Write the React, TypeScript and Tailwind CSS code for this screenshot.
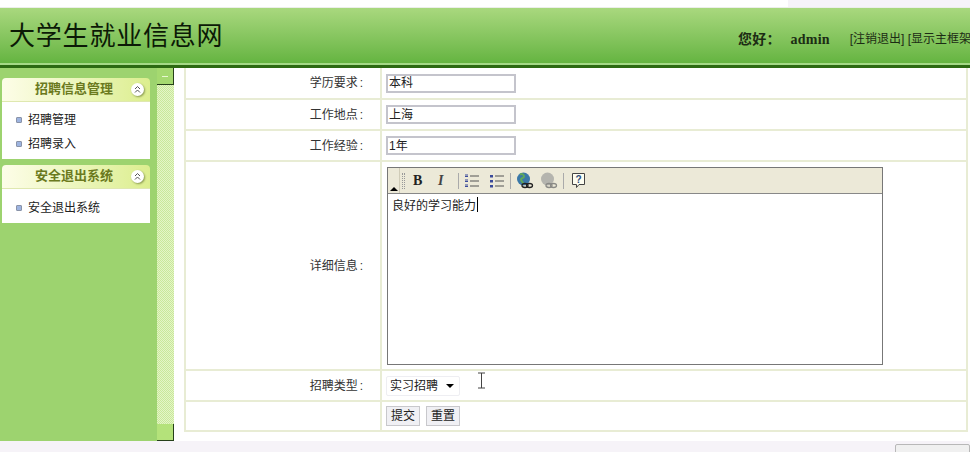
const cjk = { fontFamily: '"Liberation Sans","Noto Sans CJK SC",sans-serif' };
const serif = { fontFamily: '"Liberation Serif","Noto Sans CJK SC",serif' };

function Collapse() {
  return (
    <span className="flex h-[13px] w-[13px] items-center justify-center rounded-full bg-white shadow-[1px_1px_2px_#8a9a50]">
      <svg width="9" height="9" viewBox="0 0 9 9" fill="none" stroke="#555" strokeWidth="1">
        <path d="M2 4 L4.5 1.5 L7 4 M2 7.5 L4.5 5 L7 7.5" />
      </svg>
    </span>
  );
}

function Panel({ title, items, bodyClass }: { title: string; items: string[]; bodyClass: string }) {
  return (
    <div className="w-[148px]">
      <div className="flex h-[24px] items-center justify-between rounded-t-[4px] border-b border-[#dfe8b0] bg-gradient-to-r from-[#fdfde8] to-[#dcee8e] pl-[33px] pr-[6px]">
        <span className="mb-[2px] text-[13px] font-bold text-[#6b7a1e]">{title}</span>
        <Collapse />
      </div>
      <div className={`flex flex-col bg-white pl-[14px] ${bodyClass}`}>
        {items.map((t) => (
          <div key={t} className="flex h-[24px] shrink-0 items-center gap-[6px] text-[12px] text-[#222]">
            <span className="h-[6px] w-[6px] rounded-[1px] border border-[#8a93a8] bg-[#9db4e0]" />
            {t}
          </div>
        ))}
      </div>
    </div>
  );
}

function Row({ label, h, children }: { label: string; h: string; children?: React.ReactNode }) {
  return (
    <div className={`flex border-b-2 border-[#e8ecd4] ${h}`}>
      <div className="flex w-[194px] items-center justify-end pr-[17px] text-[12px] text-[#333]">
        {label}
        {label && <span className="pl-[2px]">:</span>}
      </div>
      <div className="w-[2px] bg-[#e8ecd4]" />
      <div className="flex flex-1 items-center pl-[4px]">{children}</div>
    </div>
  );
}

function TextBox({ v }: { v: string }) {
  return (
    <div className="flex h-[19px] w-[130px] items-center border-2 border-[#c4c4cc] bg-white pl-[1px] text-[12px] text-[#222]">{v}</div>
  );
}

function Toolbar() {
  return (
    <div className="flex h-[26px] shrink-0 items-center border-b border-[#888] bg-[#ece9d8]">
      <div className="flex h-full w-[12px] items-end justify-center border-r border-[#d0ccb8] pb-[2px]">
        <span className="h-0 w-0 border-x-[4px] border-b-[4px] border-x-transparent border-b-black" />
      </div>
      <div className="ml-[2px] h-[16px] w-[3px] border-x border-dotted border-[#999]" />
      <span className="ml-[8px] w-[12px] text-[14px] font-bold leading-none text-[#222]" style={serif}>B</span>
      <span className="ml-[13px] w-[9px] text-[14px] font-bold italic leading-none text-[#444]" style={serif}>I</span>
      <div className="ml-[11px] h-[16px] w-px bg-[#aaa]" />
      <svg className="ml-[5px]" width="16" height="16" viewBox="0 0 16 16">
        <path d="M1 2h3M1 3.5h3M1 7h3M1 8.5h3M1 12h3M1 13.5h3" stroke="#3a4a9a" strokeWidth="1" />
        <path d="M6 3h9M6 8h9M6 13h9" stroke="#555" strokeWidth="1" />
      </svg>
      <svg className="ml-[9px]" width="16" height="16" viewBox="0 0 16 16">
        <rect x="1" y="2" width="3" height="2.5" fill="#3a4a9a" />
        <rect x="1" y="7" width="3" height="2.5" fill="#3a4a9a" />
        <rect x="1" y="12" width="3" height="2.5" fill="#3a4a9a" />
        <path d="M6 3h9M6 8h9M6 13h9" stroke="#555" strokeWidth="1" />
      </svg>
      <div className="ml-[5px] h-[16px] w-px bg-[#aaa]" />
      <svg className="ml-[5px]" width="18" height="18" viewBox="0 0 18 18">
        <circle cx="7.5" cy="7" r="6.5" fill="#3a78a8" />
        <path d="M4 2.5c2-1 4 0 4 2s-3 1-3 3 2 2 2 4" stroke="#5fa85a" strokeWidth="2" fill="none" />
        <ellipse cx="9" cy="13.5" rx="3" ry="2" fill="none" stroke="#222" strokeWidth="1.3" />
        <ellipse cx="13.5" cy="13.5" rx="3" ry="2" fill="none" stroke="#222" strokeWidth="1.3" />
      </svg>
      <svg className="ml-[6px]" width="18" height="18" viewBox="0 0 18 18">
        <circle cx="7.5" cy="7" r="6.5" fill="#b4b4ae" />
        <ellipse cx="9" cy="13.5" rx="3" ry="2" fill="none" stroke="#8a8a86" strokeWidth="1.3" />
        <ellipse cx="13.5" cy="13.5" rx="3" ry="2" fill="none" stroke="#8a8a86" strokeWidth="1.3" />
      </svg>
      <div className="ml-[5px] h-[16px] w-px bg-[#aaa]" />
      <svg className="ml-[7px]" width="15" height="17" viewBox="0 0 15 17">
        <path d="M1.5 1.5h12v11H8l-2.5 3v-3h-4z" fill="#fdfdf0" stroke="#444" />
        <text x="7.5" y="10.5" textAnchor="middle" fontSize="10" fontWeight="bold" fill="#2a4a7a" fontFamily="Liberation Sans">?</text>
      </svg>
    </div>
  );
}

export default function App() {
  return (
    <div className="flex h-[452px] w-[970px] flex-col overflow-hidden bg-[#f6f3f8]" style={cjk}>
      <div className="flex h-[8px] shrink-0 border-b border-[#eceeea]">
        <div className="w-[788px] bg-white" />
        <div className="flex-1 bg-[#f6f3f8]" />
      </div>
      <header className="flex h-[60px] shrink-0 items-center justify-between border-b-[3px] border-[#2c6a12] bg-gradient-to-b from-[#a9d87e] to-[#62b33e] shadow-[inset_0_-2px_0_#a4d986]">
        <h1 className="pl-[9px] text-[26px] font-normal leading-none tracking-[0.8px] text-[#0c1a06]" style={serif}>大学生就业信息网</h1>
        <div className="mt-[5px] flex w-[232px] items-center overflow-hidden whitespace-nowrap text-[#1c2c14]">
          <span className="text-[14px] font-bold tracking-[0.2px]" style={serif}>您好：<span className="ml-[10px]">admin</span></span>
          <span className="ml-[20px] text-[12px]">[注销退出] [显示主框架]</span>
        </div>
      </header>
      <div className="flex h-[373px] shrink-0">
        <aside className="flex w-[157px] flex-col gap-[6px] bg-[#9dd36f] pl-[2px] pt-[10px]">
          <Panel title="招聘信息管理" items={["招聘管理", "招聘录入"]} bodyClass="h-[57px] pt-[6px]" />
          <Panel title="安全退出系统" items={["安全退出系统"]} bodyClass="h-[34px] pt-[7px]" />
        </aside>
        <div className="flex w-[17px] flex-col justify-between bg-[conic-gradient(#c9e89a_25%,#e4f5c8_0_50%,#c9e89a_0_75%,#e4f5c8_0)] bg-[length:2px_2px]">
          <div className="flex h-[17px] items-center justify-center border-b border-r border-[#26401a] bg-[#a5d970]">
            <span className="h-px w-[6px] bg-[#e8f8d0]" />
          </div>
          <div className="flex h-[17px] items-center justify-center border-b border-r border-[#26401a] bg-[#b4e27a]" />
        </div>
        <main className="flex-1 bg-white pl-[10px] pr-[2px]">
          <div className="h-[364px] border-x-2 border-[#e8ecd4]">
            <Row label="学历要求" h="h-[32px]"><TextBox v="本科" /></Row>
            <Row label="工作地点" h="h-[31px]"><TextBox v="上海" /></Row>
            <Row label="工作经验" h="h-[31px]"><TextBox v="1年" /></Row>
            <Row label="详细信息" h="h-[209px]">
              <div className="ml-[1px] mt-[1px] flex h-[198px] w-[496px] flex-col border border-[#777] bg-white">
                <Toolbar />
                <div className="flex items-start pl-[4px] pt-[3px] text-[12px] text-[#222]">
                  良好的学习能力<span className="ml-px h-[15px] w-px bg-black" />
                </div>
              </div>
            </Row>
            <Row label="招聘类型" h="h-[31px]">
              <div className="flex h-[20px] w-[74px] items-center justify-between rounded-[2px] border border-[#eeeef2] pl-[3px] pr-[5px] text-[12px] text-[#222]">
                实习招聘
                <span className="h-0 w-0 border-x-[4px] border-t-[4px] border-x-transparent border-t-black" />
              </div>
              <svg className="ml-[17px] mb-[10px]" width="9" height="17" viewBox="0 0 9 17" fill="none" stroke="#444">
                <path d="M1 1h7M4.5 1v15M1 16h7" />
              </svg>
            </Row>
            <Row label="" h="h-[30px]">
              <div className="flex gap-[6px]">
                <div className="flex h-[20px] w-[34px] items-center justify-center border border-[#c8c8cc] bg-[#f0f0f4] text-[12px] text-[#222]">提交</div>
                <div className="flex h-[20px] w-[34px] items-center justify-center border border-[#c8c8cc] bg-[#f0f0f4] text-[12px] text-[#222]">重置</div>
              </div>
            </Row>
          </div>
        </main>
      </div>
      <div className="flex h-[11px] shrink-0 justify-end overflow-hidden">
        <div className="mt-[3px] h-[10px] w-[75px] shrink-0 rounded-t-[2px] border border-[#b8b8b8] bg-[#f0f0f0]" />
      </div>
    </div>
  );
}
